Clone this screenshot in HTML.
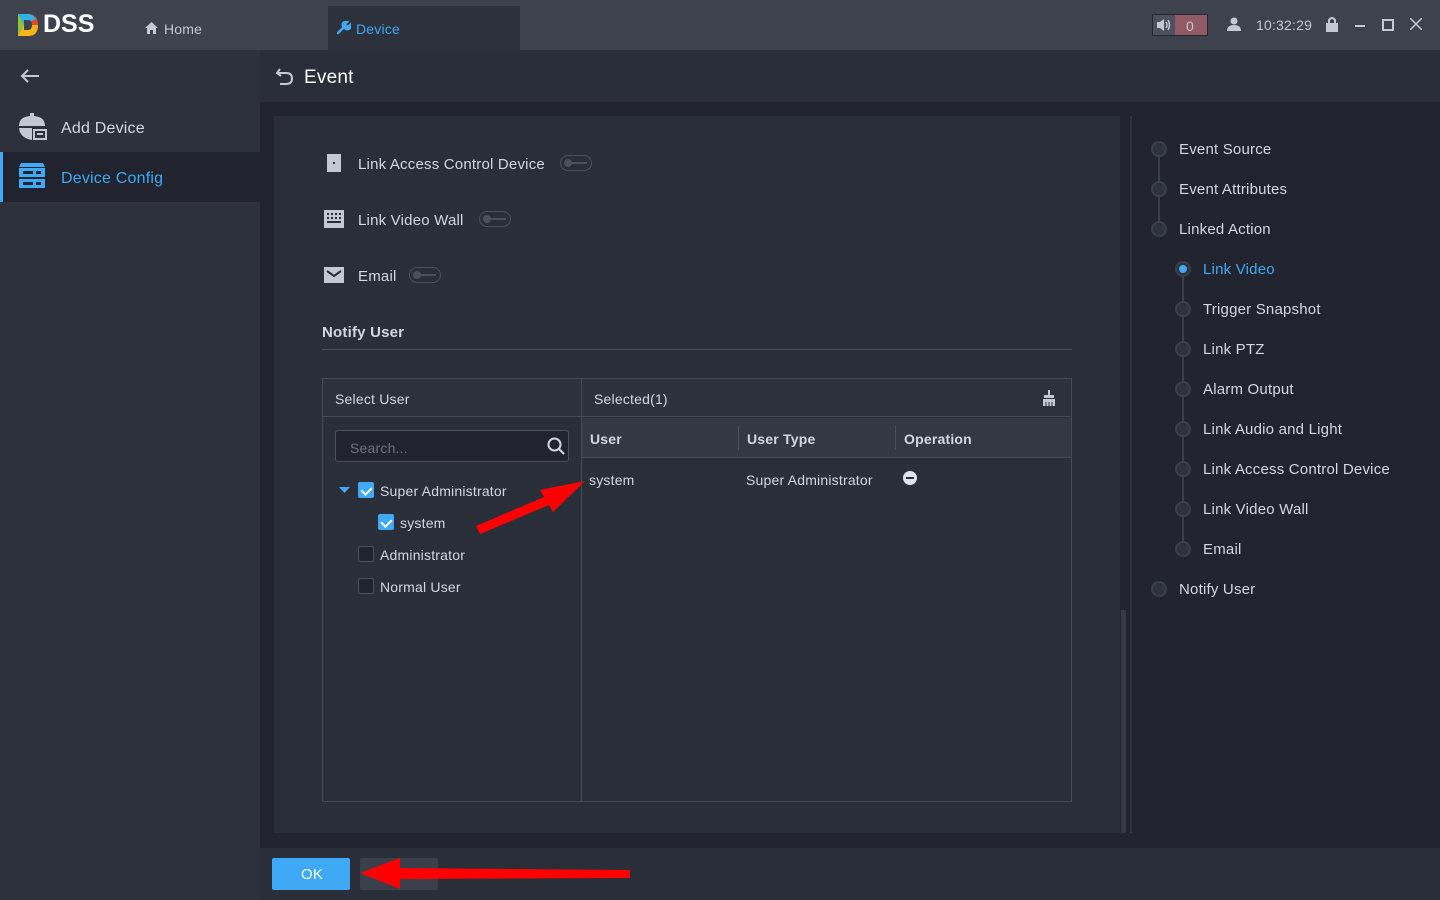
<!DOCTYPE html>
<html><head><meta charset="utf-8"><style>
*{margin:0;padding:0;box-sizing:border-box}
body{width:1440px;height:900px;background:#21242e;font-family:"Liberation Sans",sans-serif;color:#d3d7e0;position:relative;overflow:hidden;font-size:15px}
.abs{position:absolute}
.top{left:0;top:0;width:1440px;height:50px;background:#3d424d}
.side{left:0;top:50px;width:260px;height:850px;background:#2d313c}
.t{position:absolute;white-space:nowrap;margin-top:1px;letter-spacing:0.2px}
.tog{position:absolute;width:32px;height:16px;border:1px solid #4a505e;border-radius:8px}
.tog:before{content:"";position:absolute;left:3px;top:3px;width:8px;height:8px;border-radius:50%;background:#4a505e}
.tog:after{content:"";position:absolute;left:10px;top:6px;width:16px;height:2px;background:#4a505e}
.dot{position:absolute;width:16px;height:16px;border-radius:50%;background:#2d313c;border:2px solid #3a3f4b}
.cb{position:absolute;width:16px;height:16px;border:1px solid #4a505e;background:#21242e;border-radius:2px}
.cb.on{background:#3fa9f5;border-color:#3fa9f5}
.cb.on:after{content:"";position:absolute;left:4px;top:2px;width:5px;height:8px;border:solid #fff;border-width:0 2px 2px 0;transform:rotate(45deg)}
</style></head><body>
<div class="abs top"></div>
<svg class="abs" style="left:16px;top:12px" width="24" height="26" viewBox="0 0 24 26"><path d="M2 2 L12 2 Q22 2 22 13 Q22 24 12 24 L2 24Z" fill="#e9432c"/><path d="M2 2 L12 2 Q17 2 20 7 L8 13Z" fill="#2db3e6"/><path d="M2 2 L8 13 L2 24Z" fill="#8cc63f"/><path d="M8 13 L22 13 Q22 24 12 24 L2 24Z" fill="#f7b614"/><path d="M8 8 L12 8 Q16 8 16 13 Q16 18 12 18 L8 18Z" fill="#3d424d"/></svg>
<div class="t" style="left:43px;top:9px;font-size:25px;font-weight:bold;color:#fff;letter-spacing:0">DSS</div>
<svg class="abs" style="left:145px;top:22px" width="13" height="12" viewBox="0 0 13 12"><path d="M0 6 L6.5 0 L13 6 L11 6 L11 12 L8 12 L8 8 L5 8 L5 12 L2 12 L2 6Z" fill="#c4c8d2"/></svg>
<div class="t" style="left:164px;top:20px;font-size:14px;color:#c4c8d2">Home</div>
<div class="abs" style="left:328px;top:6px;width:192px;height:44px;background:#2d313c"></div>
<svg class="abs" style="left:337px;top:21px" width="14" height="14" viewBox="0 0 14 14"><path d="M1 12 L7 6 M6 5 Q5 1 9 1 L10 1 L8 3 L9 5 L11 6 L13 4 Q14 9 9 8Z" stroke="#3fa9f5" stroke-width="2.5" fill="#3fa9f5" stroke-linecap="round"/></svg>
<div class="t" style="left:356px;top:20px;font-size:14px;color:#3fa9f5">Device</div>
<div class="abs" style="left:1152px;top:14px;width:56px;height:22px;border:1px solid #23262e;background:#4a505e"></div>
<div class="abs" style="left:1175px;top:15px;width:32px;height:20px;background:#925a64"></div>
<svg class="abs" style="left:1156px;top:17px" width="16" height="16"><path d="M1 5H4L8 2V14L4 11H1Z" fill="#c4c8d2"/><path d="M10 5Q12 8 10 11M12 3Q15 8 12 13" stroke="#c4c8d2" stroke-width="1.5" fill="none"/></svg>
<div class="t" style="left:1186px;top:17px;font-size:14px;color:#c4c8d2">0</div>
<svg class="abs" style="left:1227px;top:17px" width="14" height="14"><circle cx="7" cy="4" r="3.5" fill="#c4c8d2"/><path d="M0 14 Q0 8 7 8 Q14 8 14 14Z" fill="#c4c8d2"/></svg>
<div class="t" style="left:1256px;top:16px;font-size:14px;color:#c4c8d2">10:32:29</div>
<svg class="abs" style="left:1325px;top:16px" width="14" height="16"><rect x="1" y="7" width="12" height="9" fill="#c4c8d2"/><path d="M4 7 V4 Q7 0 10 4 V7" fill="none" stroke="#c4c8d2" stroke-width="2"/></svg>
<div class="abs" style="left:1355px;top:25px;width:10px;height:2px;background:#c4c8d2"></div>
<div class="abs" style="left:1382px;top:19px;width:12px;height:12px;border:2px solid #c4c8d2"></div>
<svg class="abs" style="left:1410px;top:18px" width="12" height="12"><path d="M0 0L12 12M12 0L0 12" stroke="#c4c8d2" stroke-width="1.5"/></svg>

<div class="abs side"></div>
<svg class="abs" style="left:20px;top:68px" width="20" height="16"><path d="M19 8H2M8 2L2 8L8 14" stroke="#c4c8d2" stroke-width="2" fill="none"/></svg>
<svg class="abs" style="left:18px;top:113px" width="30" height="28"><path d="M1 13 Q1 3 14 3 Q27 3 27 13Z" fill="#c4c8d2"/><rect x="12" y="0" width="4" height="4" fill="#c4c8d2"/><path d="M1 15 H14 V27 Q2 25 1 15Z" fill="#c4c8d2"/><rect x="15" y="15" width="13" height="12" fill="#2d313c"/><rect x="16" y="17" width="12" height="9" fill="none" stroke="#c4c8d2" stroke-width="2"/><rect x="19" y="20" width="6" height="2" fill="#c4c8d2"/></svg>
<div class="t" style="left:61px;top:119px;font-size:16px;color:#d3d7e0">Add Device</div>
<div class="abs" style="left:0;top:152px;width:260px;height:50px;background:#21242e;border-left:3px solid #3fa9f5"></div>
<svg class="abs" style="left:18px;top:163px" width="28" height="26"><path d="M3 0H25L27 4H1Z" fill="#3fa9f5"/><rect x="1" y="5" width="26" height="9" fill="#3fa9f5"/><rect x="1" y="16" width="26" height="9" fill="#3fa9f5"/><rect x="5" y="8" width="10" height="3" fill="#21242e"/><rect x="5" y="19" width="10" height="3" fill="#21242e"/><rect x="18" y="8" width="5" height="3" fill="#21242e"/><rect x="18" y="19" width="5" height="3" fill="#21242e"/></svg>
<div class="t" style="left:61px;top:169px;font-size:16px;color:#3fa9f5">Device Config</div>

<div class="abs" style="left:260px;top:50px;width:1180px;height:52px;background:#2a2e39"></div>
<svg class="abs" style="left:275px;top:66px" width="20" height="20"><path d="M5 3L2 7L6 10M2 7H11Q17 7 17 12.5Q17 18 11 18H5" stroke="#c4c8d2" stroke-width="2" fill="none"/></svg>
<div class="t" style="left:304px;top:66px;font-size:19px;color:#fff">Event</div>

<div class="abs" style="left:274px;top:116px;width:846px;height:717px;background:#2a2e39"></div>
<div class="abs" style="left:1121px;top:610px;width:5px;height:223px;background:#363a46"></div>
<div class="abs" style="left:1130px;top:116px;width:2px;height:717px;background:#2f333e"></div>
<div class="abs" style="left:260px;top:848px;width:1180px;height:52px;background:#2a2e39"></div>

<div class="abs" style="left:327px;top:154px;width:14px;height:18px;background:#c4c8d2"></div>
<div class="abs" style="left:333px;top:162px;width:2px;height:2px;background:#2a2e39"></div>
<div class="t" style="left:358px;top:155px;color:#d3d7e0">Link Access Control Device</div>
<div class="tog" style="left:560px;top:155px"></div>
<svg class="abs" style="left:324px;top:210px" width="20" height="18"><rect width="20" height="18" fill="#c4c8d2"/><g fill="#2a2e39"><rect x="3" y="3" width="2" height="2"/><rect x="7" y="3" width="2" height="2"/><rect x="11" y="3" width="2" height="2"/><rect x="15" y="3" width="2" height="2"/><rect x="3" y="7" width="2" height="2"/><rect x="7" y="7" width="2" height="2"/><rect x="11" y="7" width="2" height="2"/><rect x="15" y="7" width="2" height="2"/><rect x="3" y="11" width="14" height="2"/></g></svg>
<div class="t" style="left:358px;top:211px">Link Video Wall</div>
<div class="tog" style="left:479px;top:211px"></div>
<svg class="abs" style="left:324px;top:267px" width="20" height="16"><rect width="20" height="16" fill="#c4c8d2"/><path d="M3 4L10 9L17 4" stroke="#2a2e39" stroke-width="2" fill="none"/></svg>
<div class="t" style="left:358px;top:267px">Email</div>
<div class="tog" style="left:409px;top:267px"></div>
<div class="t" style="left:322px;top:323px;font-weight:bold;color:#d3d7e0">Notify User</div>
<div class="abs" style="left:322px;top:349px;width:750px;height:1px;background:#4a505e"></div>

<div class="abs" style="left:322px;top:378px;width:750px;height:424px;border:1px solid #454a57"></div>
<div class="abs" style="left:323px;top:379px;width:748px;height:38px;background:#2d313c;border-bottom:1px solid #454a57"></div>
<div class="abs" style="left:581px;top:379px;width:1px;height:422px;background:#454a57"></div>
<div class="t" style="left:335px;top:390px;font-size:14px">Select User</div>
<div class="t" style="left:594px;top:390px;font-size:14px">Selected(1)</div>
<svg class="abs" style="left:1042px;top:390px" width="14" height="16"><rect x="6" y="0" width="2" height="5" fill="#c4c8d2"/><rect x="2" y="5" width="10" height="3" fill="#c4c8d2"/><rect x="1" y="9" width="12" height="7" fill="#c4c8d2"/><path d="M4 12V16M7 12V16M10 12V16" stroke="#2d313c"/></svg>
<div class="abs" style="left:582px;top:418px;width:489px;height:40px;background:#343844;border-bottom:1px solid #454a57"></div>
<div class="abs" style="left:738px;top:426px;width:1px;height:24px;background:#4a505e"></div>
<div class="abs" style="left:895px;top:426px;width:1px;height:24px;background:#4a505e"></div>
<div class="t" style="left:590px;top:430px;font-size:14px;font-weight:bold">User</div>
<div class="t" style="left:747px;top:430px;font-size:14px;font-weight:bold">User Type</div>
<div class="t" style="left:904px;top:430px;font-size:14px;font-weight:bold">Operation</div>
<div class="t" style="left:589px;top:471px;font-size:14px">system</div>
<div class="t" style="left:746px;top:471px;font-size:14px">Super Administrator</div>
<div class="abs" style="left:903px;top:471px;width:14px;height:14px;border-radius:50%;background:#e0e3ea"></div>
<div class="abs" style="left:906px;top:477px;width:8px;height:2px;background:#2a2e39"></div>

<div class="abs" style="left:335px;top:430px;width:234px;height:32px;border:1px solid #4a505e;border-radius:3px;background:#21242e"></div>
<div class="t" style="left:350px;top:439px;font-size:14px;color:#6b7180">Search...</div>
<svg class="abs" style="left:547px;top:437px" width="18" height="18"><circle cx="7.5" cy="7.5" r="6" stroke="#d3d7e0" stroke-width="2" fill="none"/><path d="M12 12L17 17" stroke="#d3d7e0" stroke-width="2"/></svg>
<svg class="abs" style="left:339px;top:487px" width="11" height="7"><path d="M0 0H11L5.5 6Z" fill="#3fa9f5"/></svg>
<div class="cb on" style="left:358px;top:482px"></div>
<div class="t" style="left:380px;top:482px;font-size:14px">Super Administrator</div>
<div class="cb on" style="left:378px;top:514px"></div>
<div class="t" style="left:400px;top:514px;font-size:14px">system</div>
<div class="cb" style="left:358px;top:546px"></div>
<div class="t" style="left:380px;top:546px;font-size:14px">Administrator</div>
<div class="cb" style="left:358px;top:578px"></div>
<div class="t" style="left:380px;top:578px;font-size:14px">Normal User</div>

<div class="abs" style="left:1158px;top:150px;width:2px;height:80px;background:#3a3f4b"></div>
<div class="abs" style="left:1182px;top:270px;width:2px;height:280px;background:#3a3f4b"></div>
<div class="dot" style="left:1151px;top:141px"></div><div class="t" style="left:1179px;top:140px">Event Source</div>
<div class="dot" style="left:1151px;top:181px"></div><div class="t" style="left:1179px;top:180px">Event Attributes</div>
<div class="dot" style="left:1151px;top:221px"></div><div class="t" style="left:1179px;top:220px">Linked Action</div>
<div class="dot" style="left:1175px;top:261px"></div><div class="abs" style="left:1179px;top:265px;width:8px;height:8px;border-radius:50%;background:#3fa9f5"></div><div class="t" style="left:1203px;top:260px;color:#3fa9f5">Link Video</div>
<div class="dot" style="left:1175px;top:301px"></div><div class="t" style="left:1203px;top:300px">Trigger Snapshot</div>
<div class="dot" style="left:1175px;top:341px"></div><div class="t" style="left:1203px;top:340px">Link PTZ</div>
<div class="dot" style="left:1175px;top:381px"></div><div class="t" style="left:1203px;top:380px">Alarm Output</div>
<div class="dot" style="left:1175px;top:421px"></div><div class="t" style="left:1203px;top:420px">Link Audio and Light</div>
<div class="dot" style="left:1175px;top:461px"></div><div class="t" style="left:1203px;top:460px">Link Access Control Device</div>
<div class="dot" style="left:1175px;top:501px"></div><div class="t" style="left:1203px;top:500px">Link Video Wall</div>
<div class="dot" style="left:1175px;top:541px"></div><div class="t" style="left:1203px;top:540px">Email</div>
<div class="dot" style="left:1151px;top:581px"></div><div class="t" style="left:1179px;top:580px">Notify User</div>

<div class="abs" style="left:272px;top:858px;width:78px;height:32px;background:#3fa9f5;border-radius:2px"></div>
<div class="t" style="left:301px;top:865px;color:#fff">OK</div>
<div class="abs" style="left:360px;top:858px;width:78px;height:32px;background:#3a3f4b;border-radius:2px"></div>
<div class="t" style="left:378px;top:865px;color:#8a909c">Cancel</div>

<svg class="abs" style="left:0;top:0" width="1440" height="900"><g fill="#f00"><path d="M476 526 L544 497 L540 490 L585 481 L553 512 L549 505 L480 534Z"/><path d="M360 873 L400 858 L400 868 L630 870 L630 878 L400 879 L400 889Z"/></g></svg>
</body></html>
